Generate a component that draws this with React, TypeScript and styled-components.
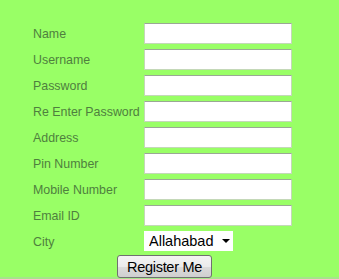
import React from "react";
import styled, { createGlobalStyle } from "styled-components";

const Global = createGlobalStyle`
  html, body {
    margin: 0;
    padding: 0;
    background: #99ff66;
  }
  body {
    font-family: "Liberation Sans", Arial, sans-serif;
  }
`;

const Page = styled.div`
  width: 339px;
  height: 279px;
  box-sizing: border-box;
  padding: 23px 0 0 33px;
  background: #99ff66;
  border-bottom: 2px solid #a6e48c;
`;

const Form = styled.form`
  display: grid;
  grid-template-columns: 111px 148px;
  grid-auto-rows: 21px;
  row-gap: 5px;
  align-items: center;
`;

const Label = styled.label`
  font-size: 12.4px;
  color: #4f7f3e;
  white-space: nowrap;
`;

const Field = styled.input`
  box-sizing: border-box;
  width: 148px;
  height: 21px;
  margin: 0;
  background: #fff;
  border: 1px solid #c4d8b8;
  border-top-color: #9aa894;
  outline: none;
`;

const SelectWrap = styled.div`
  position: relative;
  width: 89px;
  height: 20px;
  align-self: start;
`;

const Select = styled.select`
  appearance: none;
  -webkit-appearance: none;
  box-sizing: border-box;
  width: 100%;
  height: 20px;
  margin: 0;
  padding: 0 0 0 5px;
  border: none;
  background: #fff;
  font-family: "Liberation Sans", Arial, sans-serif;
  font-size: 14.5px;
  color: #000;
  outline: none;
`;

const Arrow = styled.span`
  position: absolute;
  right: 3px;
  top: 8px;
  width: 0;
  height: 0;
  border-left: 4px solid transparent;
  border-right: 4px solid transparent;
  border-top: 4px solid #000;
  pointer-events: none;
`;

const ButtonRow = styled.div`
  grid-column: 1 / span 2;
  display: flex;
  padding-left: 84px;
  height: 23px;
  align-self: start;
  margin-top: -2px;
`;

const Button = styled.button`
  box-sizing: border-box;
  width: 95px;
  height: 23px;
  padding: 0;
  border: 1px solid #707070;
  border-radius: 3px;
  background: linear-gradient(#f4f4f4 0%, #ebebeb 50%, #dcdcdc 51%, #cfcfcf 100%);
  font-family: "Liberation Sans", Arial, sans-serif;
  font-size: 14.5px;
  letter-spacing: -0.3px;
  color: #000;
`;

const fields = [
  "Name",
  "Username",
  "Password",
  "Re Enter Password",
  "Address",
  "Pin Number",
  "Mobile Number",
  "Email ID",
];

export default function App() {
  return (
    <>
      <Global />
      <Page>
        <Form onSubmit={(e) => e.preventDefault()}>
          {fields.map((f) => (
            <React.Fragment key={f}>
              <Label>{f}</Label>
              <Field type={f.includes("Password") ? "password" : "text"} />
            </React.Fragment>
          ))}
          <Label>City</Label>
          <SelectWrap>
            <Select defaultValue="Allahabad">
              <option>Allahabad</option>
            </Select>
            <Arrow />
          </SelectWrap>
          <ButtonRow>
            <Button type="submit">Register Me</Button>
          </ButtonRow>
        </Form>
      </Page>
    </>
  );
}
